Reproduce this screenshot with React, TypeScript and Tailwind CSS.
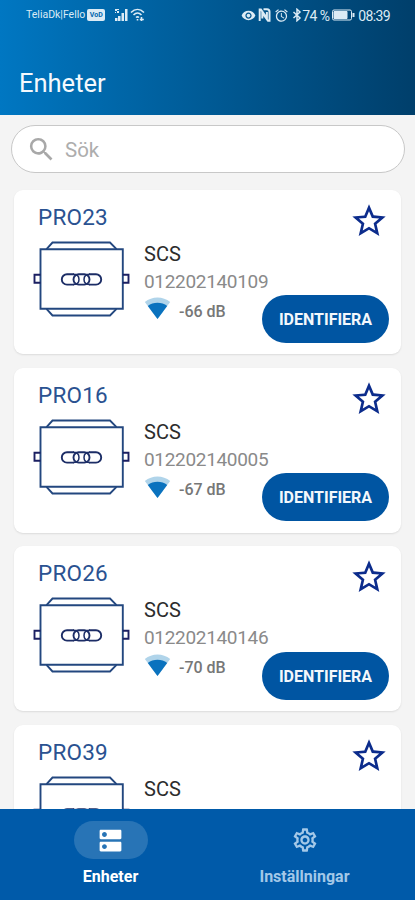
import {
  MdAlarm,
  MdDns,
  MdOutlineSettings,
  MdRemoveRedEye,
  MdSearch,
  MdStarBorder,
} from "react-icons/md";

type Device = { name: string; type: string; serial?: string; signal?: string };

const devices: Device[] = [
  { name: "PRO23", type: "SCS", serial: "012202140109", signal: "-66 dB" },
  { name: "PRO16", type: "SCS", serial: "012202140005", signal: "-67 dB" },
  { name: "PRO26", type: "SCS", serial: "012202140146", signal: "-70 dB" },
  { name: "PRO39", type: "SCS" },
];

function DeviceIcon() {
  return (
    <svg width="98" height="76" viewBox="0 0 98 76" fill="none" stroke="#23477f" strokeWidth="1.900">
      <path d="M7.500 8.200h82.300v59.600H7.500z" />
      <path d="M13.500 8.200l6-6.700h57.500l6.500 6.700M13.500 67.800l6 6.700h57.500l6.500-6.700" />
      <path d="M7.500 33.800H1.500v8h6M89.800 33.800h5.700v8h-5.700" stroke="#1b1f62" />
      <g stroke="#1c2d66" strokeWidth="1.900">
        <path d="M41 33.200H34a5.200 5.200 0 0 0 0 10.400h7M56 33.200H63a5.200 5.200 0 0 1 0 10.400h-7" />
        <rect x="40.500" y="33.200" width="16" height="10.400" rx="5.200" />
        <path d="M40 33.200c3.800 0 6 2 6 5.200s-2.200 5.200-6 5.200M57 33.200c-3.800 0-6 2-6 5.200s2.200 5.200 6 5.200" strokeWidth="1.500" />
      </g>
    </svg>
  );
}

function SignalIcon() {
  return (
    <svg width="28" height="24" viewBox="0 0 28 24">
      <path d="M13.500 22L.8 5C8-1 19-1 26.200 5z" fill="#b0d4ea" />
      <path d="M13.500 22L3.800 9C9 4.800 18 4.800 23.200 9z" fill="#0a72be" />
    </svg>
  );
}

function DeviceCard({ name, type, serial, signal }: Device) {
  return (
    <div className="h-[164.500px] shrink-0 rounded-[9px] bg-white shadow-[0_1px_2px_rgba(0,0,0,0.1)]">
      <div className="flex h-[51px] justify-between pl-6 pr-3">
        <h2 className="pt-[13px] text-[22.500px] leading-7 tracking-[0.2px] text-[#2a5291]">{name}</h2>
        <MdStarBorder className="mt-[11px] size-10 text-[#0c2c8c]" />
      </div>
      <div className="flex pl-[19px]">
        <DeviceIcon />
        <div className="ml-[13px] w-[119px] shrink-0">
          <p className="pt-px text-[20px] leading-6 tracking-[0.1px] text-[#2c2c2c]">{type}</p>
          {serial && <p className="mt-1 text-[19px] leading-6 tracking-[-0.320px] text-[#8a8a8a]">{serial}</p>}
          {signal && (
            <div className="mt-[3px] flex items-center">
              <SignalIcon />
              <span className="ml-[7px] mt-[5px] whitespace-nowrap text-[16px] font-medium leading-5 text-[#777]">{signal}</span>
            </div>
          )}
        </div>
        {serial && (
          <button className="-ml-px mt-[54.300px] h-12 w-[127px] shrink-0 rounded-full bg-[#0055a2] pt-0.5 text-[16px] font-bold text-[#f3f8fc]">
            IDENTIFIERA
          </button>
        )}
      </div>
    </div>
  );
}

function StatusBar() {
  return (
    <div className="flex h-[30px] items-center pl-[26px] pr-[25px] text-[#dcebf5]">
      <span className="pt-px text-[10.500px] leading-none">TeliaDk|Fello</span>
      <span className="ml-0.5 flex h-[12px] w-[18px] items-center justify-center rounded-[2px] bg-[#dcebf5] text-[7px] font-bold text-[#0067ad]">VoD</span>
      <svg className="ml-[9px]" width="14" height="14" viewBox="0 0 14 14" fill="currentColor">
        <path d="M1 10h2.500v3H1zM4 8h2.500v5H4zM7.500 5H10v8H7.500zM11 1h2.500v12H11zM1 1h2v2H1zM3 3h2v2H3zM3 1h2v1H3zM1 4h1v1H1z" />
      </svg>
      <svg className="ml-0.5" width="15" height="14" viewBox="0 0 15 14" fill="none" stroke="currentColor" strokeWidth="1.600">
        <path d="M1 4.500c4-4 9-4 13 0M3.500 7c2.500-2.500 5.500-2.500 8 0M6 9.500c1-.8 2-.8 3 0" />
        <path d="M7.500 11v1.500M11.500 9v4M9.800 11.500h4" />
      </svg>
      <div className="ml-auto flex items-center">
        <MdRemoveRedEye className="size-[15px]" />
        <svg className="ml-0.5" width="13" height="14" viewBox="0 0 13 14" fill="none" stroke="currentColor" strokeWidth="2">
          <path d="M1.700 13V1.500h1.200l6 8.500V4M5.500 1.300H9a2.500 2.500 0 0 1 2.500 2.500v9H10L4.300 5v5.500" />
        </svg>
        <MdAlarm className="ml-[3px] size-[15px]" />
        <svg className="ml-[3px]" width="10" height="14" viewBox="0 0 10 14" fill="none" stroke="currentColor" strokeWidth="1.500">
          <path d="M1.500 4l6.500 6-3 2.700V1.300L8 4l-6.500 6" />
        </svg>
        <span className="w-[30px] whitespace-nowrap pt-px text-[14px] leading-none tracking-[-0.500px]">74 %</span>
        <svg width="23" height="12" viewBox="0 0 23 12" fill="none" stroke="currentColor">
          <rect x=".5" y="1" width="19" height="10" rx="1.500" />
          <path d="M2 2.500h13v7H2z" fill="currentColor" />
          <path d="M21.500 4v4" strokeWidth="2" />
        </svg>
        <span className="ml-[3px] pt-px text-[14px] leading-none tracking-[-0.600px]">08:39</span>
      </div>
    </div>
  );
}

export default function App() {
  return (
    <div className="flex h-[900px] w-[415px] flex-col overflow-hidden bg-[#f4f4f4] font-['Roboto',sans-serif]">
      <header className="h-[115px] shrink-0 bg-linear-to-r from-[#0077c2] to-[#003f6b]">
        <StatusBar />
        <h1 className="pl-[19px] pt-[37px] text-[25.500px] leading-8 text-[#f4f9fd]">Enheter</h1>
      </header>

      <main className="flex min-h-0 flex-1 flex-col overflow-hidden">
        <div className="ml-[11px] mt-[10px] flex h-12 w-[394px] shrink-0 items-center rounded-full border border-[#c8c8c8] bg-white pl-[14px]">
          <MdSearch className="size-[31px] text-[#a8a8a8]" />
          <span className="ml-2 pt-0.5 text-[20.500px] text-[#adadad]">Sök</span>
        </div>
        <div className="flex flex-col gap-[13.900px] px-[14px] pt-[16.700px]">
          {devices.map((device) => (
            <DeviceCard key={device.name} {...device} />
          ))}
        </div>
      </main>

      <nav className="flex h-[91px] shrink-0 bg-[#005aa9] px-[14px] pt-[12px]">
        <div className="flex flex-1 flex-col items-center text-white">
          <div className="flex h-[38px] w-[74px] items-center justify-center rounded-full bg-[#2874b6]">
            <MdDns className="size-[29px]" />
          </div>
          <span className="mt-2 text-[16px] font-bold leading-5">Enheter</span>
        </div>
        <div className="flex flex-1 flex-col items-center pl-px text-[#a3c8e8]">
          <div className="flex h-[38px] items-center">
            <MdOutlineSettings className="size-[28px]" />
          </div>
          <span className="mt-2 text-[16px] font-bold leading-5">Inställningar</span>
        </div>
      </nav>
    </div>
  );
}
